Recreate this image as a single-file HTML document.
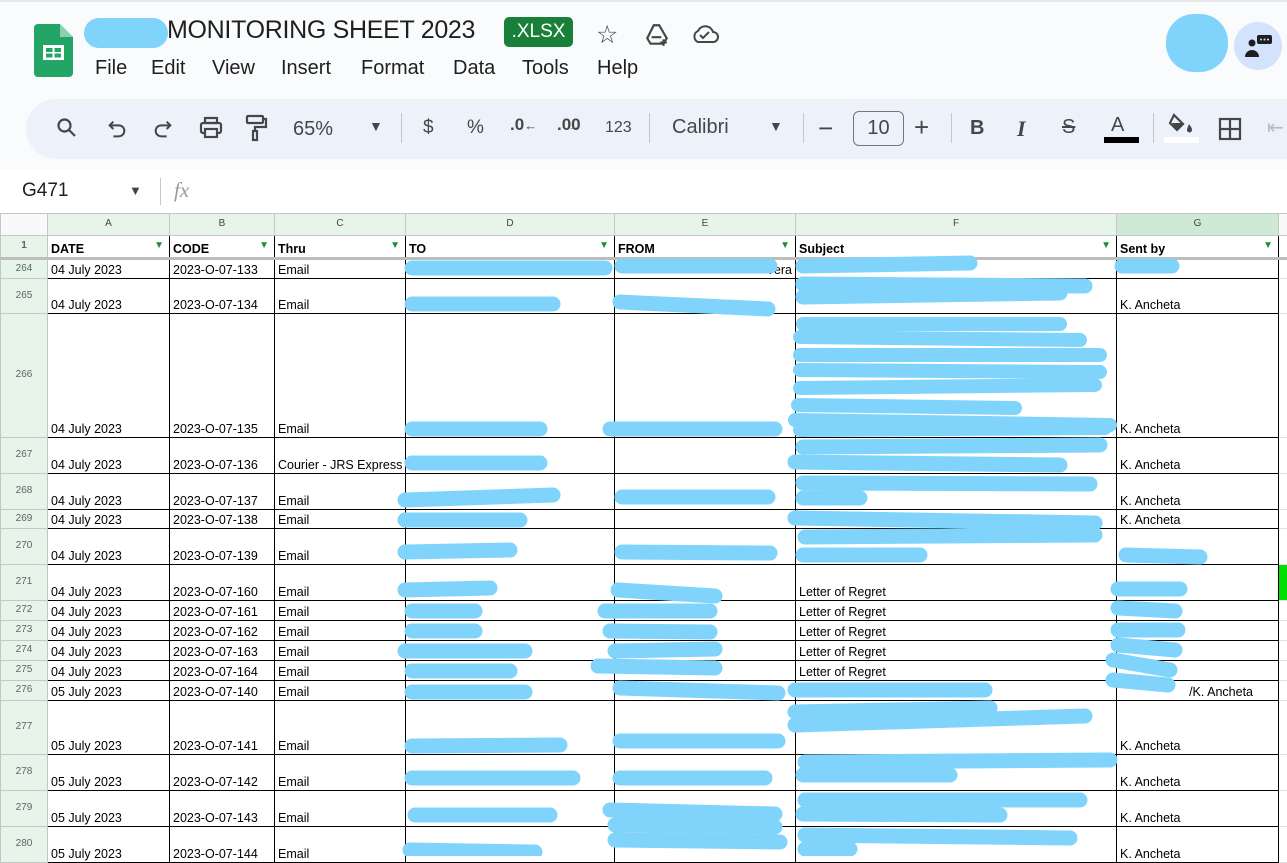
<!DOCTYPE html>
<html><head><meta charset="utf-8"><style>
*{box-sizing:border-box;margin:0;padding:0}
body{width:1287px;height:856px;overflow:hidden;background:#f9fbfd;font-family:"Liberation Sans",sans-serif;position:relative;color:#1f1f1f}
.a{position:absolute}
.menu span{position:absolute;top:57px;font-size:20px;color:#1f1f1f}
.tb{position:absolute;left:26px;top:99px;width:1290px;height:60px;background:#edf2fa;border-radius:30px}
.ti{position:absolute;top:113px;font-size:20px;color:#444746}
.sep{position:absolute;top:113px;width:1px;height:30px;background:#c7c7c7}
table{position:absolute;left:0;top:213px;width:1298px;border-collapse:collapse;table-layout:fixed;font-family:"Liberation Sans",sans-serif}
td{border:1px solid #000;font-size:12.5px;vertical-align:bottom;padding:0 3px 1px;white-space:nowrap;overflow:hidden;background:#fff;color:#000;line-height:14px}
td.rh{background:#e6f4ea;color:#5f6368;font-size:10px;text-align:center;vertical-align:middle;border:1px solid #c4c7c5;border-right:1px solid #c4c7c5}
tr.ch td{background:#e6f4ea;color:#444;font-size:10px;text-align:center;vertical-align:middle;border:1px solid #c4c7c5;height:22px}
tr.hd td{font-weight:bold;height:23px;position:relative;border-bottom:3px solid #bdbdbd}
td.h{border-top:1px solid #e0e0e0;border-bottom:1px solid #e0e0e0;border-left:1px solid #1e8e3e;border-right:none}
.f{position:absolute;right:5px;top:3px;font-size:10px;color:#1e8e3e;font-weight:normal}
</style></head><body>
<div class="a" style="left:0;top:0;width:1287px;height:2px;background:#e8e8e8"></div>
<svg class="a" style="left:34px;top:24px" width="39" height="53" viewBox="0 0 39 53"><path d="M4 0h22l13 13v36a4 4 0 0 1-4 4H4a4 4 0 0 1-4-4V4a4 4 0 0 1 4-4z" fill="#23a566"/><path d="M26 0v13h13z" fill="#8ed1b1"/><rect x="9" y="21" width="21" height="15" fill="#fff"/><rect x="12" y="24" width="6.5" height="4" fill="#23a566"/><rect x="20.5" y="24" width="6.5" height="4" fill="#23a566"/><rect x="12" y="29.5" width="6.5" height="4" fill="#23a566"/><rect x="20.5" y="29.5" width="6.5" height="4" fill="#23a566"/></svg>
<div class="a" style="left:84px;top:18px;width:84px;height:30px;background:#80d4fc;border-radius:15px"></div>
<div class="a" style="left:167px;top:16px;font-size:25px;color:#1f1f1f;letter-spacing:-0.3px">MONITORING SHEET 2023</div>
<div class="a" style="left:504px;top:17px;width:69px;height:30px;background:#188038;border-radius:5px;color:#fff;font-size:19px;text-align:center;line-height:30px">.XLSX</div>
<div class="a" style="left:596px;top:20px;font-size:25px;color:#444">☆</div>
<svg class="a" style="left:644px;top:22px" width="26" height="26" viewBox="0 0 24 24" fill="none" stroke="#444746" stroke-width="2"><path d="M9 3h5l7 12-3 5H6l-3-5z M7 14h9"/><path d="M18 16v6M15 19h6"/></svg>
<svg class="a" style="left:690px;top:22px" width="30" height="24" viewBox="0 0 30 24" fill="none" stroke="#444746" stroke-width="2"><path d="M8 20h15a5 5 0 0 0 0-10 8 8 0 0 0-15-1 6 6 0 0 0 0 11z"/><path d="M10 13l3 3 6-6"/></svg>
<div class="menu"><span style="left:95px">File</span><span style="left:151px">Edit</span><span style="left:212px">View</span><span style="left:281px">Insert</span><span style="left:361px">Format</span><span style="left:453px">Data</span><span style="left:522px">Tools</span><span style="left:597px">Help</span></div>
<div class="a" style="left:1166px;top:14px;width:62px;height:58px;background:#80d4fc;border-radius:28px"></div>
<div class="a" style="left:1234px;top:22px;width:48px;height:48px;background:#d3e3fd;border-radius:50%"></div>
<svg class="a" style="left:1244px;top:33px" width="30" height="26" viewBox="0 0 30 26"><circle cx="8" cy="10" r="3.5" fill="#1f1f1f"/><path d="M1 24a7 7 0 0 1 14 0z" fill="#1f1f1f"/><rect x="13" y="2" width="15" height="9" rx="2" fill="#1f1f1f"/><circle cx="17" cy="6.5" r="1" fill="#d3e3fd"/><circle cx="20.5" cy="6.5" r="1" fill="#d3e3fd"/><circle cx="24" cy="6.5" r="1" fill="#d3e3fd"/></svg>
<div class="tb"></div>
<svg class="a" style="left:55px;top:116px" width="24" height="24" viewBox="0 0 24 24" fill="none" stroke="#444746" stroke-width="2.2"><circle cx="9.5" cy="9.5" r="6"/><path d="M14 14l6 6"/></svg>
<svg class="a" style="left:106px;top:118px" width="22" height="22" viewBox="0 0 24 24" fill="none" stroke="#444746" stroke-width="2.2"><path d="M8 4L4 8l4 4M4 8h10a6 6 0 0 1 0 12H8"/></svg>
<svg class="a" style="left:152px;top:118px" width="22" height="22" viewBox="0 0 24 24" fill="none" stroke="#444746" stroke-width="2.2"><path d="M16 4l4 4-4 4M20 8H10a6 6 0 0 0 0 12h6"/></svg>
<svg class="a" style="left:198px;top:116px" width="26" height="24" viewBox="0 0 26 24" fill="none" stroke="#444746" stroke-width="2.2"><rect x="7" y="2" width="12" height="5"/><rect x="3" y="7" width="20" height="10" rx="2"/><rect x="7" y="13" width="12" height="8" fill="#edf2fa"/></svg>
<svg class="a" style="left:244px;top:114px" width="24" height="28" viewBox="0 0 24 28" fill="none" stroke="#444746" stroke-width="2.2"><rect x="3" y="2" width="16" height="7" rx="1"/><path d="M19 5h3v8H11v4"/><rect x="9" y="17" width="4" height="9"/></svg>
<div class="ti" style="left:293px;top:118px">65%</div>
<div class="ti" style="left:369px;top:118px;font-size:14px">▼</div>
<div class="sep" style="left:401px"></div>
<div class="ti" style="left:423px;top:117px;font-size:19px">$</div>
<div class="ti" style="left:467px;top:117px;font-size:19px">%</div>
<div class="ti" style="left:510px;top:115px;font-size:17px;font-weight:bold">.0<span style="font-size:13px">←</span></div>
<div class="ti" style="left:557px;top:115px;font-size:17px;font-weight:bold">.00<span style="font-size:11px;margin-left:-12px">→</span></div>
<div class="ti" style="left:605px;top:119px;font-size:16px">123</div>
<div class="sep" style="left:649px"></div>
<div class="ti" style="left:672px;top:116px">Calibri</div>
<div class="ti" style="left:769px;top:118px;font-size:14px">▼</div>
<div class="sep" style="left:803px"></div>
<div class="ti" style="left:818px;top:113px;font-size:26px">−</div>
<div class="a" style="left:853px;top:111px;width:51px;height:35px;border:1px solid #747775;border-radius:6px;font-size:20px;text-align:center;line-height:33px;color:#444746">10</div>
<div class="ti" style="left:914px;top:112px;font-size:26px">+</div>
<div class="sep" style="left:951px"></div>
<div class="ti" style="left:970px;top:117px;font-weight:bold">B</div>
<div class="ti" style="left:1017px;top:116px;font-style:italic;font-family:'Liberation Serif',serif;font-weight:bold;font-size:22px">I</div>
<div class="ti" style="left:1062px;top:116px;text-decoration:line-through">S</div>
<div class="ti" style="left:1111px;top:114px">A</div>
<div class="a" style="left:1104px;top:137px;width:35px;height:6px;background:#000"></div>
<div class="sep" style="left:1153px"></div>
<svg class="a" style="left:1168px;top:112px" width="28" height="24" viewBox="0 0 28 24"><path d="M6 3l9 9-6 6-7-7z" fill="none" stroke="#444746" stroke-width="2.2"/><path d="M4 11h12l-7 7z" fill="#444746"/><path d="M21 12c2 3 3 4 3 6a2.5 2.5 0 0 1-5 0c0-2 1-3 2-6z" fill="#444746"/></svg>
<div class="a" style="left:1164px;top:137px;width:35px;height:6px;background:#fff"></div>
<svg class="a" style="left:1218px;top:117px" width="24" height="24" viewBox="0 0 24 24" fill="none" stroke="#444746" stroke-width="2.2"><rect x="2" y="2" width="20" height="20"/><path d="M12 2v20M2 12h20"/></svg>
<div class="ti" style="left:1267px;top:115px;color:#bbb">⇤</div>
<div class="a" style="left:0;top:170px;width:1287px;height:43px;background:#fff"></div>
<div class="a" style="left:22px;top:180px;font-size:19px;color:#1f1f1f">G471</div>
<div class="a" style="left:129px;top:183px;font-size:13px;color:#444">▼</div>
<div class="a" style="left:160px;top:178px;width:1px;height:27px;background:#c7c7c7"></div>
<div class="a" style="left:174px;top:178px;font-size:21px;color:#999;font-family:'Liberation Serif',serif;font-style:italic">fx</div>
<div class="a" style="left:0;top:212px;width:1287px;height:644px;background:#fff"></div>
<table>
<colgroup><col style="width:47px"><col style="width:122px"><col style="width:105px"><col style="width:131px"><col style="width:209px"><col style="width:181px"><col style="width:321px"><col style="width:162px"><col style="width:20px"></colgroup>
<tr class="ch"><td style="background:#f8f9fa"></td><td>A</td><td>B</td><td>C</td><td>D</td><td>E</td><td>F</td><td style="background:#ceead6">G</td><td style="background:#f8f9fa"></td></tr>
<tr class="hd"><td class="rh" style="border-bottom:3px solid #bdbdbd">1</td><td>DATE<span class="f">▼</span></td><td>CODE<span class="f">▼</span></td><td>Thru<span class="f">▼</span></td><td>TO<span class="f">▼</span></td><td>FROM<span class="f">▼</span></td><td>Subject<span class="f">▼</span></td><td>Sent by<span class="f">▼</span></td><td class="h" style="border-bottom:3px solid #bdbdbd"></td></tr>
<tr style="height:20px"><td class="rh">264</td><td>04 July 2023</td><td>2023-O-07-133</td><td>Email</td><td></td><td style="text-align:right">Vera</td><td></td><td></td><td class="h"></td></tr>
<tr style="height:35px"><td class="rh">265</td><td>04 July 2023</td><td>2023-O-07-134</td><td>Email</td><td></td><td></td><td></td><td>K. Ancheta</td><td class="h"></td></tr>
<tr style="height:124px"><td class="rh">266</td><td>04 July 2023</td><td>2023-O-07-135</td><td>Email</td><td></td><td></td><td></td><td>K. Ancheta</td><td class="h"></td></tr>
<tr style="height:36px"><td class="rh">267</td><td>04 July 2023</td><td>2023-O-07-136</td><td>Courier - JRS Express</td><td></td><td></td><td></td><td>K. Ancheta</td><td class="h"></td></tr>
<tr style="height:36px"><td class="rh">268</td><td>04 July 2023</td><td>2023-O-07-137</td><td>Email</td><td></td><td></td><td></td><td>K. Ancheta</td><td class="h"></td></tr>
<tr style="height:19px"><td class="rh">269</td><td>04 July 2023</td><td>2023-O-07-138</td><td>Email</td><td></td><td></td><td></td><td>K. Ancheta</td><td class="h"></td></tr>
<tr style="height:36px"><td class="rh">270</td><td>04 July 2023</td><td>2023-O-07-139</td><td>Email</td><td></td><td></td><td></td><td></td><td class="h"></td></tr>
<tr style="height:36px"><td class="rh">271</td><td>04 July 2023</td><td>2023-O-07-160</td><td>Email</td><td></td><td></td><td>Letter of Regret</td><td></td><td class="h" style="background:#00e000"></td></tr>
<tr style="height:20px"><td class="rh">272</td><td>04 July 2023</td><td>2023-O-07-161</td><td>Email</td><td></td><td></td><td>Letter of Regret</td><td></td><td class="h"></td></tr>
<tr style="height:20px"><td class="rh">273</td><td>04 July 2023</td><td>2023-O-07-162</td><td>Email</td><td></td><td></td><td>Letter of Regret</td><td></td><td class="h"></td></tr>
<tr style="height:20px"><td class="rh">274</td><td>04 July 2023</td><td>2023-O-07-163</td><td>Email</td><td></td><td></td><td>Letter of Regret</td><td></td><td class="h"></td></tr>
<tr style="height:20px"><td class="rh">275</td><td>04 July 2023</td><td>2023-O-07-164</td><td>Email</td><td></td><td></td><td>Letter of Regret</td><td></td><td class="h"></td></tr>
<tr style="height:20px"><td class="rh">276</td><td>05 July 2023</td><td>2023-O-07-140</td><td>Email</td><td></td><td></td><td></td><td style="text-align:right;padding-right:25px">/K. Ancheta</td><td class="h"></td></tr>
<tr style="height:54px"><td class="rh">277</td><td>05 July 2023</td><td>2023-O-07-141</td><td>Email</td><td></td><td></td><td></td><td>K. Ancheta</td><td class="h"></td></tr>
<tr style="height:36px"><td class="rh">278</td><td>05 July 2023</td><td>2023-O-07-142</td><td>Email</td><td></td><td></td><td></td><td>K. Ancheta</td><td class="h"></td></tr>
<tr style="height:36px"><td class="rh">279</td><td>05 July 2023</td><td>2023-O-07-143</td><td>Email</td><td></td><td></td><td></td><td>K. Ancheta</td><td class="h"></td></tr>
<tr style="height:36px"><td class="rh">280</td><td>05 July 2023</td><td>2023-O-07-144</td><td>Email</td><td></td><td></td><td></td><td>K. Ancheta</td><td class="h"></td></tr>
</table>
<svg class="a" style="left:0;top:0" width="1287" height="856" fill="none" stroke="#80d4fc" stroke-linecap="round" stroke-width="15">
<path d="M412 268H605M622 266H770M803 266L970 263M1122 266H1172"/>
<path d="M412 304H553M620 302L768 309M803 284L1085 286M803 297L1060 293"/>
<path stroke-width="14" d="M803 324L1060 324M800 337L1080 340M800 355L1100 355M800 370L1100 372M800 388L1095 385M798 405L1015 408M795 420L1110 425M800 430L1105 428"/>
<path d="M412 429H540M610 429H775"/>
<path d="M412 463H540M803 447L1100 445M795 462L1060 465"/>
<path d="M405 500L553 495M622 497H768M803 483L1090 484M803 498L860 498"/>
<path d="M405 520H520M795 518L1095 523"/>
<path d="M405 552L510 550M622 552L770 553M805 537L1095 535M803 555L920 555M1126 555L1200 557"/>
<path d="M405 590L490 588M618 590L715 596M1118 589L1180 589"/>
<path d="M412 611H475M605 611L710 611M412 631H475M610 631L710 632M405 651L525 651M615 651L715 649M412 671H510M598 666L715 668M1118 608L1175 611M1118 630L1178 630M1118 645L1175 650M1113 660L1170 670M1113 680L1168 685"/>
<path d="M412 692L525 692M620 688L778 693M795 690L985 690"/>
<path d="M412 746L560 745M620 741L778 741M795 712L990 708M795 725L1085 716"/>
<path d="M412 778L573 778M620 778L765 778M805 762L1110 760M803 775L950 775"/>
<path d="M415 815L550 815M610 810L775 814M615 825L775 827M805 800L1080 800M803 814L1000 815"/>
<path d="M410 850L535 852M615 840L780 842M805 835L1070 838M805 849L850 849"/>
</svg>
</body></html>
